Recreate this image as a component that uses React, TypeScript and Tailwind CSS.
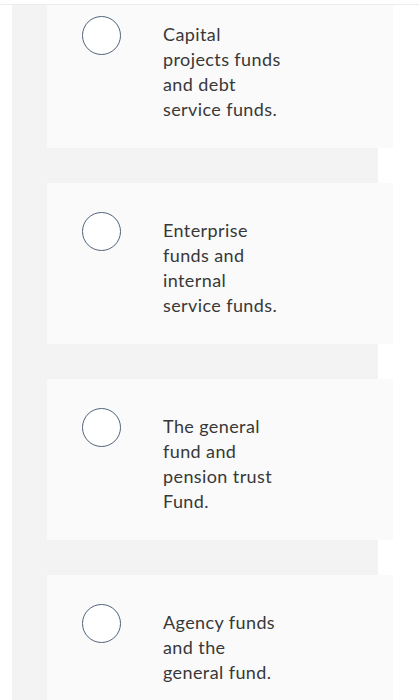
const options: string[][] = [
  ['Capital', 'projects funds', 'and debt', 'service funds.'],
  ['Enterprise', 'funds and', 'internal', 'service funds.'],
  ['The general', 'fund and', 'pension trust', 'Fund.'],
  ['Agency funds', 'and the', 'general fund.'],
];

function Option({ lines }: { lines: string[] }) {
  return (
    <div className="w-[346px] h-[161px] shrink-0 bg-[#fafafa] flex pl-[35px] pt-[29px]">
      <div className="w-[39px] h-[39px] shrink-0 rounded-full border-[1.5px] border-[#52647a] bg-white" />
      <div className="ml-[42px] mt-[6px] text-[18px] leading-[25px] text-[#383838] tracking-[0.4px]">
        {lines.map((l) => (
          <div key={l} className="whitespace-nowrap">
            {l}
          </div>
        ))}
      </div>
    </div>
  );
}

export default function App() {
  return (
    <div
      className="relative w-[419px] h-[700px] overflow-hidden bg-white"
      style={{ fontFamily: 'Lato, "Liberation Sans", sans-serif' }}
    >
      <div className="absolute top-0 left-0 right-0 h-[5px] bg-white border-b border-[#ececec] z-10" />
      <div className="pl-[12px] -mt-[13px]">
        <div className="w-[366px] bg-[#f3f3f3] pl-[35px] flex flex-col gap-[35px]">
          {options.map((o, i) => (
            <Option key={i} lines={o} />
          ))}
        </div>
      </div>
    </div>
  );
}
